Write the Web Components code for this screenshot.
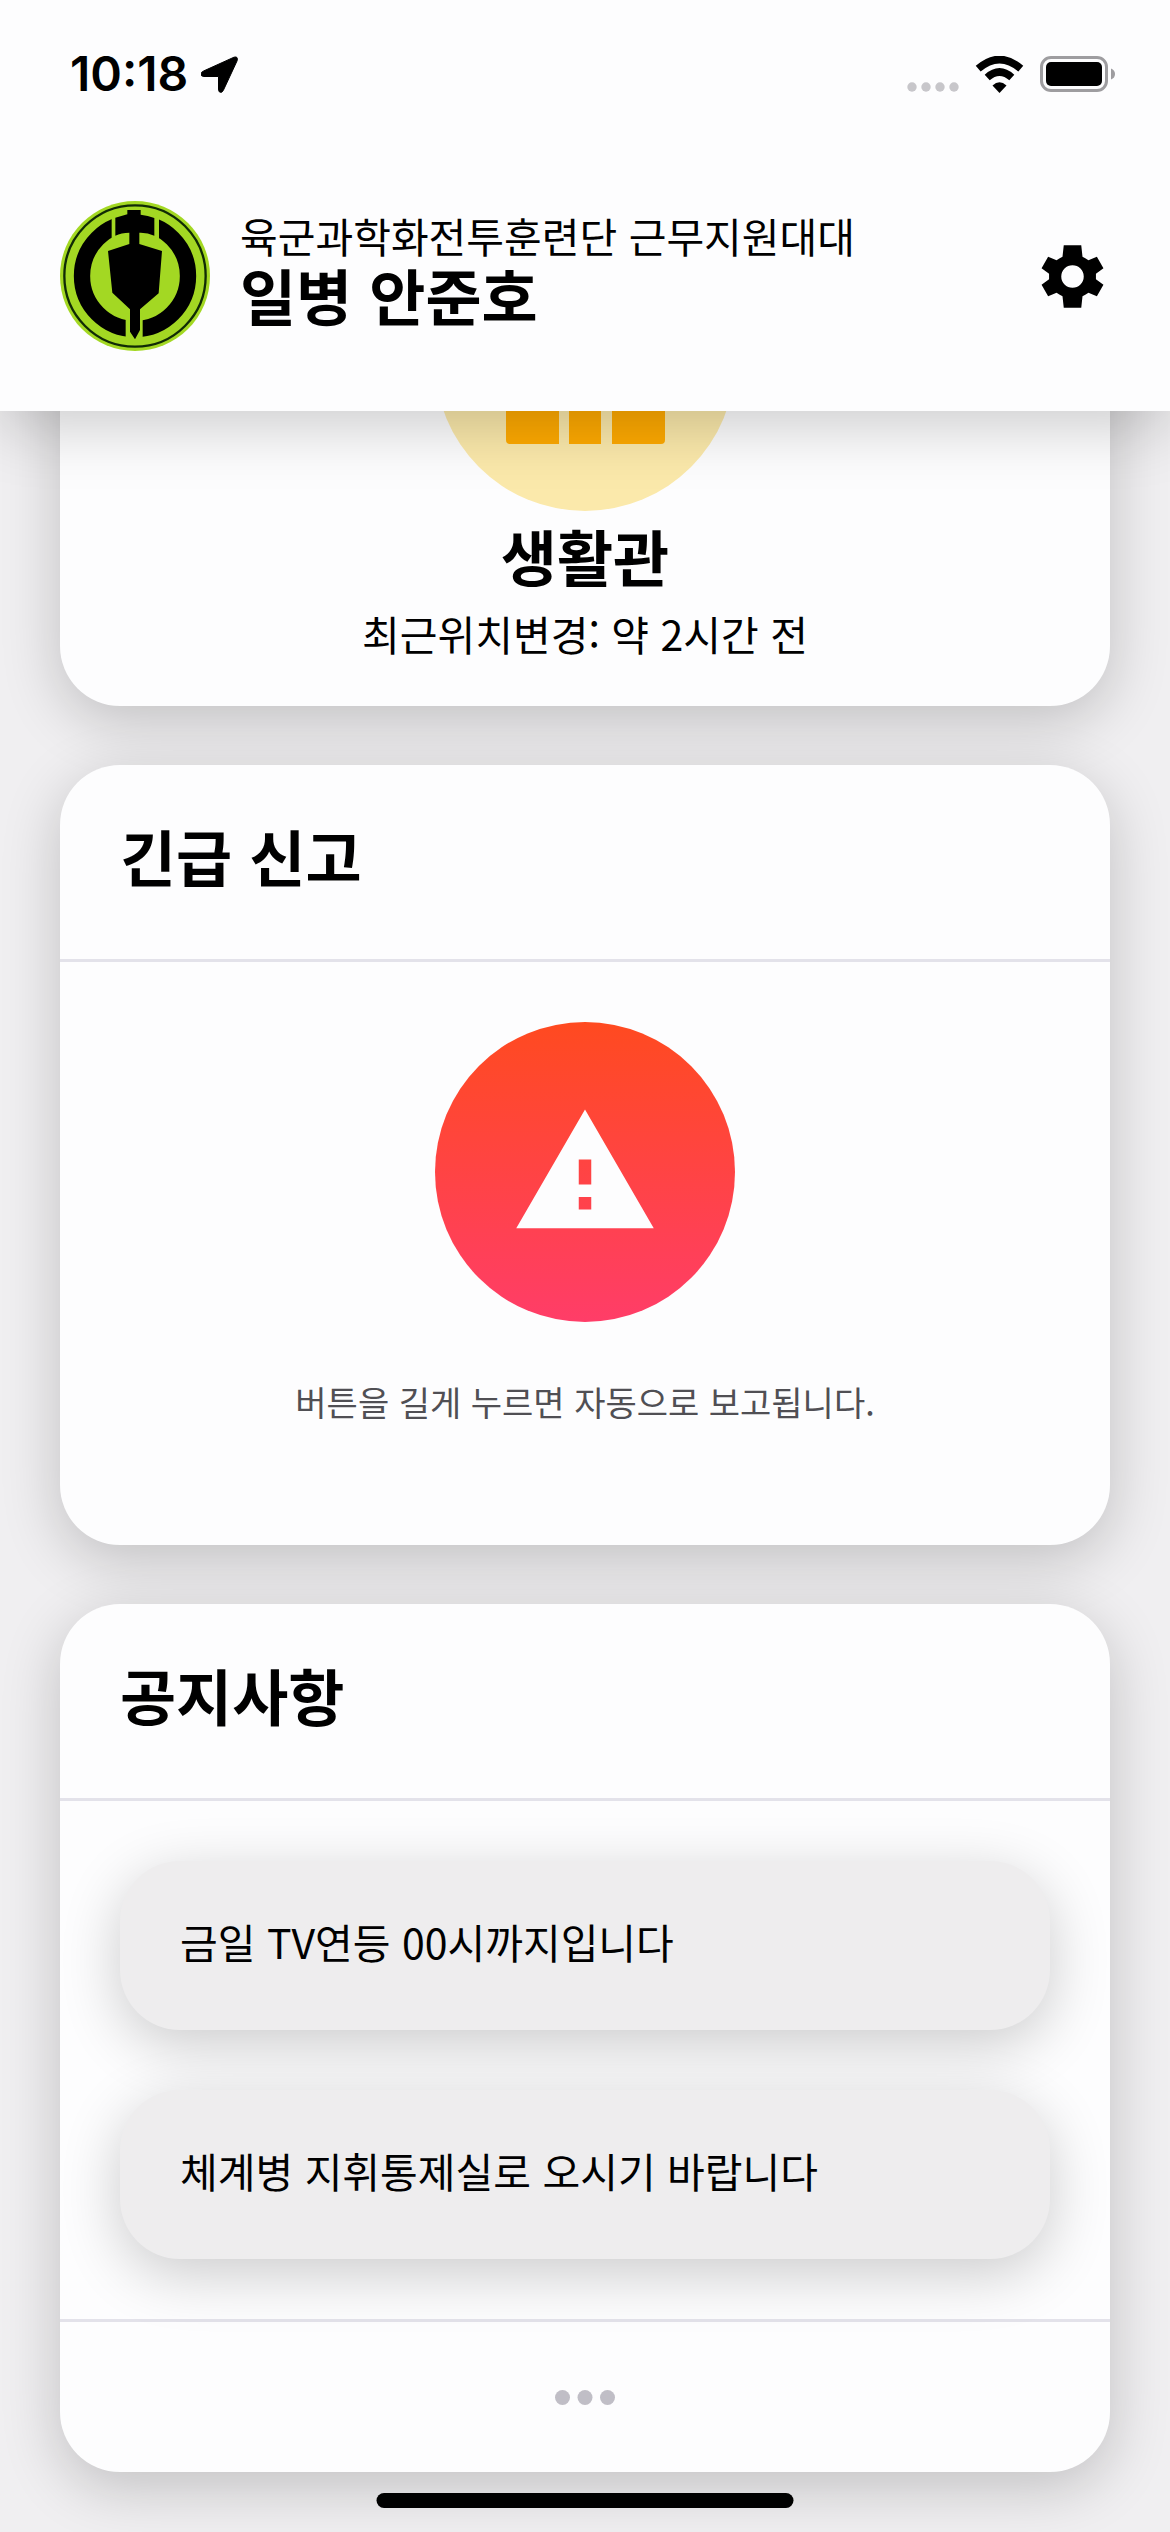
<!DOCTYPE html>
<html lang="ko">
<head>
<meta charset="utf-8">
<meta name="viewport" content="width=device-width, initial-scale=1">
<title>생활관</title>
<style>
  body {
    margin: 0;
    background: #f0eff1;
    color: #000;
    font-family: "Noto Sans CJK KR", sans-serif;
    --surface: #fdfdfe;
    --line: #e3e2ea;
    --shadow: 0 15px 60px rgba(0, 0, 0, .2);
    --body-size: 41px;
    --title-size: 61px;
  }
</style>
</head>
<body>
<app-shell>
  <status-bar slot="top" time="10:18"></status-bar>
  <profile-header slot="top" unit="육군과학화전투훈련단 근무지원대대" name="일병 안준호"></profile-header>

  <info-card>
    <location-status place="생활관">최근위치변경: 약 2시간 전</location-status>
  </info-card>

  <info-card heading="긴급 신고">
    <emergency-report>버튼을 길게 누르면 자동으로 보고됩니다.</emergency-report>
  </info-card>

  <info-card heading="공지사항">
    <notice-list>
      <notice-item>금일 TV연등 00시까지입니다</notice-item>
      <notice-item>체계병 지휘통제실로 오시기 바랍니다</notice-item>
    </notice-list>
    <more-button></more-button>
  </info-card>
</app-shell>

<script>
  class BaseElement extends HTMLElement {
    connectedCallback() {
      if (this.shadowRoot) return;
      this.attachShadow({ mode: "open" }).innerHTML =
        `<style>*{box-sizing:border-box} svg{display:block} button{border:0;margin:0;padding:0;background:none;font:inherit;color:inherit}</style>` + this.render();
    }
  }

  customElements.define("app-shell", class extends BaseElement {
    render() {
      return `<style>
        :host { display: flex; flex-direction: column; height: 100vh; overflow: hidden; position: relative; }
        header { flex: none; position: relative; z-index: 1; background: var(--surface); box-shadow: var(--shadow); }
        /* The feed is scrolled to its end, so its first card runs under the header. */
        main { flex: 1; min-height: 0; display: flex; flex-direction: column; justify-content: flex-end; gap: 59px; padding: 0 60px 60px; }
        .home { position: absolute; z-index: 2; left: 50%; bottom: 24px; width: 36%; max-width: 417px; height: 15px; border-radius: 8px; background: #000; transform: translateX(-50%); }
      </style>
      <header><slot name="top"></slot></header>
      <main><slot></slot></main>
      <div class="home"></div>`;
    }
  });

  customElements.define("status-bar", class extends BaseElement {
    render() {
      return `<style>
        :host { display: flex; justify-content: space-between; height: 141px; padding: 0 54px 0 70px; font: 600 48px/148px Inter, sans-serif; }
        .group { display: flex; align-items: center; height: 148px; }
        .left { gap: 13px; }
        .right { gap: 16px; }
      </style>
      <div class="group left"><span>${this.getAttribute("time")}</span>
        <svg width="37" height="37" viewBox="0 0 37 37"><path d="M33 1.200Q37.500 0 36 5L22.500 34Q21 37.500 18.500 36Q17.500 35 17.500 33V20.500H3Q0 20.500 0 18Q0 16 3 14.800Z" stroke="#000" stroke-width="1"/></svg>
      </div>
      <div class="group right">
        <svg width="52" height="37" viewBox="0 0 52 37" fill="#c7c6ca"><circle cx="5" cy="31" r="4.700"/><circle cx="19" cy="31" r="4.700"/><circle cx="33" cy="31" r="4.700"/><circle cx="47" cy="31" r="4.700"/></svg>
        <svg width="49" height="37" viewBox="0 0 49 37"><path d="M24.500 37L17.500 29.500Q24.500 23 31.500 29.500Z"/><path d="M12.200 21.500Q24.500 10.500 36.800 21.500M3.200 12.700Q24.500 -5.700 45.800 12.700" fill="none" stroke="#000" stroke-width="7.500"/></svg>
        <svg width="76" height="36" viewBox="0 0 76 36"><rect x="1.500" y="1.500" width="65" height="33" rx="9.500" fill="none" stroke="#9e9da0" stroke-width="3"/><rect x="6" y="6" width="56" height="24" rx="5"/><path d="M71 12.500Q75 14 75 18T71 23.500Z" fill="#9e9da0"/></svg>
      </div>`;
    }
  });

  customElements.define("unit-emblem", class extends BaseElement {
    render() {
      return `<style>:host { display: block; flex: none; width: 150px; height: 150px; }</style>
      <svg width="150" height="150" viewBox="60 63 450 450">
        <circle cx="285" cy="288" r="225" fill="#a3d823"/>
        <circle cx="285" cy="288" r="212" fill="none" stroke="#102b05" stroke-width="7"/>
        <circle cx="285" cy="288" r="159" fill="none" stroke="#000" stroke-width="49"/>
        <path fill="#a3d823" d="M215 98H357V180H215ZM257 400H308V480H257Z"/>
        <path d="M226 113L262 103V90H302V104Q324 106 343 114V167Q322 157 298 158V192L366 213L356 340L300 388V450L285 478L270 455V388L217 338L204 213L268 192V158Q244 158 226 167Z"/>
      </svg>`;
    }
  });

  customElements.define("profile-header", class extends BaseElement {
    render() {
      return `<style>
        :host { display: flex; align-items: center; gap: 30px; padding: 60px; }
        .who { flex: 1; min-width: 0; padding-bottom: 10px; }
        p, h1 { margin: 0; }
        p { font-size: var(--body-size); line-height: 48px; }
        h1 { font-size: var(--title-size); line-height: 72px; font-weight: 700; }
      </style>
      <unit-emblem></unit-emblem>
      <div class="who"><p>${this.getAttribute("unit")}</p><h1>${this.getAttribute("name")}</h1></div>
      <button type="button" aria-label="설정">
        <svg width="75" height="75" viewBox="0 0 24 24"><path d="M19.500 12.900L19.500 11.100L21.900 9.400L19.800 5.700L17.100 6.800Q16.300 6.200 15.200 5.700L14.800 2H9.200L8.800 5.700Q7.700 6.200 6.900 6.800L4.200 5.700L2.100 9.400L4.500 11.100V12.900L2.100 14.600L4.200 18.300L6.900 17.200Q7.700 17.800 8.800 18.300L9.200 22H14.800L15.200 18.300Q16.300 17.800 17.100 17.200L19.800 18.300L21.900 14.600ZM12 15.600a3.600 3.600 0 1 1 0-7.200a3.600 3.600 0 0 1 0 7.200Z"/></svg>
      </button>`;
    }
  });

  customElements.define("info-card", class extends BaseElement {
    render() {
      const heading = this.getAttribute("heading");
      return `<style>
        :host { display: block; flex: none; background: var(--surface); border-radius: 60px; box-shadow: var(--shadow); }
        h2 { margin: 0; padding: 48px 60px 60px; border-bottom: 3px solid var(--line); font-size: var(--title-size); line-height: 86px; font-weight: 700; }
      </style>
      ${heading ? `<h2>${heading}</h2>` : ""}<slot></slot>`;
    }
  });

  customElements.define("location-status", class extends BaseElement {
    render() {
      return `<style>
        :host { display: flex; flex-direction: column; align-items: center; padding: 60px 60px 41px; }
        h2, p { margin: 0; }
        .badge { display: grid; place-items: end center; width: 300px; height: 300px; padding-bottom: 67px; border-radius: 50%; background: #fbe9ab; }
        h2 { font-size: var(--title-size); line-height: 90px; font-weight: 700; }
        p { font-size: var(--body-size); line-height: 64px; }
      </style>
      <div class="badge">
        <svg width="159" height="150" viewBox="0 0 159 150" fill="#fa0"><path d="M0 50L53 15V150H4Q0 150 0 146ZM63 0H95V150H63ZM106 15L159 50V146Q159 150 155 150H106Z"/></svg>
      </div>
      <h2>${this.getAttribute("place")}</h2>
      <p><slot></slot></p>`;
    }
  });

  customElements.define("emergency-report", class extends BaseElement {
    render() {
      return `<style>
        :host { display: flex; flex-direction: column; align-items: center; gap: 55px; padding: 60px 60px 118px; }
        button { display: grid; place-items: center; width: 300px; height: 300px; border-radius: 50%; background: linear-gradient(#ff4a20, #ff3d68); }
        p { margin: 0; font-size: 34px; line-height: 50px; color: #504f54; }
      </style>
      <button type="button" aria-labelledby="hint">
        <svg width="150" height="150" viewBox="0 0 24 24" fill="#fdfdfe"><path d="M1 21h22L12 2 1 21zm12-3h-2v-2h2v2zm0-4h-2v-4h2v4z"/></svg>
      </button>
      <p id="hint"><slot></slot></p>`;
    }
  });

  customElements.define("notice-list", class extends BaseElement {
    render() {
      return `<style>:host { display: flex; flex-direction: column; gap: 60px; padding: 60px; }</style><slot></slot>`;
    }
  });

  customElements.define("notice-item", class extends BaseElement {
    render() {
      return `<style>
        :host { display: block; }
        a { display: block; padding: 55px 60px 64px; border-radius: 60px; background: #eeedee; box-shadow: var(--shadow); font-size: var(--body-size); line-height: 50px; color: inherit; text-decoration: none; }
      </style>
      <a href="#"><slot></slot></a>`;
    }
  });

  customElements.define("more-button", class extends BaseElement {
    render() {
      return `<style>
        :host { display: block; border-top: 3px solid var(--line); }
        button { display: grid; place-items: center; width: 100%; height: 150px; }
      </style>
      <button type="button" aria-label="더 보기">
        <svg width="60" height="15" viewBox="0 0 60 15" fill="#c0bec6"><circle cx="7.500" cy="7.500" r="7.500"/><circle cx="30" cy="7.500" r="7.500"/><circle cx="52.500" cy="7.500" r="7.500"/></svg>
      </button>`;
    }
  });
</script>
</body>
</html>
